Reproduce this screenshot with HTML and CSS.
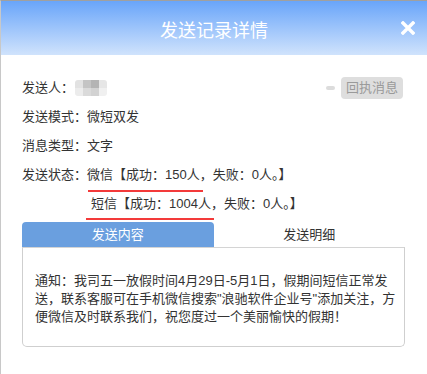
FILE: index.html
```html
<!DOCTYPE html>
<html lang="zh-CN">
<head>
    <meta charset="UTF-8">
    <meta name="viewport" content="width=device-width, initial-scale=1.0">
    <title>发送记录详情</title>
    <link rel="stylesheet" href="styles.css">
</head>
<body>
    <div class="dialog">
        <div class="dialog-head">
            <h1>发送记录详情</h1>
            <span class="close">
                <svg width="14" height="14" viewBox="0 0 14 14"><path d="M2 2 L12 12 M12 2 L2 12" stroke="#fff" stroke-width="3.4" stroke-linecap="square"/></svg>
            </span>
        </div>
        <div class="dialog-body">
            <div class="row row-sender">
                <div>
                    <span>发送人：</span>
                    <span class="mosaic">
                        <i class="m1"></i><i class="m2"></i><i class="m3"></i><i class="m4"></i>
                        <i class="m5"></i><i class="m6"></i><i class="m7"></i><i class="m8"></i>
                    </span>
                </div>
                <div class="receipt">
                    <span class="dash"></span>
                    <span class="btn">回执消息</span>
                </div>
            </div>
            <div class="row">发送模式：微短双发</div>
            <div class="row">消息类型：文字</div>
            <div class="row row-wx">发送状态：微信【成功：150人，失败：0人。】</div>
            <div class="row row-sms">短信【成功：1004人，失败：0人。】</div>

            <div class="tabs">
                <span class="tab active">发送内容</span>
                <span class="tab">发送明细</span>
            </div>
            <div class="tab-panel">
                <p>通知：我司五一放假时间4月29日-5月1日，假期间短信正常发送，联系客服可在手机微信搜索"浪驰软件企业号"添加关注，方便微信及时联系我们，祝您度过一个美丽愉快的假期！</p>
            </div>
        </div>
    </div>
</body>
</html>
```

FILE: styles.css
```css
*{
    padding: 0;
    margin: 0;
}
body{
    background: #fff;
    font-family: "Liberation Sans", "Noto Sans CJK SC", sans-serif;
    font-size: 13px;
    color: #333;
}
.dialog{
    width: 427px;
    height: 374px;
    border-top: 1px solid #a0a0a0;
    border-left: 1px solid #c8c8c8;
    box-sizing: border-box;
    overflow: hidden;
}
.dialog-head{
    height: 54px;
    background: linear-gradient(#69a5fa, #d0e3fc);
    display: flex;
    align-items: center;
    justify-content: center;
    position: relative;
}
.dialog-head h1{
    font-size: 18px;
    font-weight: normal;
    color: #fff;
    margin-top: 1px;
}
.close{
    position: absolute;
    right: 12px;
    top: 20px;
    width: 14px;
    height: 14px;
}
.close svg{
    display: block;
}
.dialog-body{
    padding: 18px 24px 0 21px;
}
.row{
    line-height: 29px;
    height: 29px;
    position: relative;
}
.row-sender{
    display: flex;
    justify-content: space-between;
    align-items: center;
}
.row-sender > div{
    display: flex;
    align-items: center;
}
.mosaic{
    display: grid;
    grid-template-columns: repeat(4, 8px);
    grid-template-rows: repeat(2, 8px);
    margin-left: 1px;
    border-radius: 3px;
    overflow: hidden;
}
.mosaic i{
    display: block;
}
.m1{ background: #e2e2e2; }
.m2{ background: #c4c4c4; }
.m3{ background: #b4b4b4; }
.m4{ background: #e6e6e6; }
.m5{ background: #ececec; }
.m6{ background: #dadada; }
.m7{ background: #d2d2d2; }
.m8{ background: #f0f0f0; }
.receipt{
    gap: 6px;
}
.dash{
    width: 9px;
    height: 4px;
    border-radius: 2px;
    background: #dcdcdc;
}
.btn{
    display: block;
    width: 62px;
    height: 22px;
    line-height: 22px;
    text-align: center;
    background: #dedede;
    color: #9a9a9a;
    border-radius: 4px;
}
.row-wx::after,
.row-sms::after{
    content: "";
    position: absolute;
    height: 2px;
    background: #f33a3a;
}
.row-wx::after{
    left: 66px;
    top: 30px;
    width: 115px;
}
.row-sms{
    padding-left: 69px;
}
.row-sms::after{
    left: 64px;
    top: 29px;
    width: 128px;
}
.tabs{
    display: flex;
    margin-top: 4px;
    width: 383px;
}
.tab{
    flex: 1;
    height: 25px;
    line-height: 25px;
    text-align: center;
}
.tab.active{
    background: #6a9fdf;
    color: #fff;
    border-radius: 4px 4px 0 0;
}
.tab-panel{
    width: 383px;
    height: 100px;
    box-sizing: border-box;
    border: 1px solid #cfcfcf;
    border-top-color: #d4d4d4;
    border-radius: 0 0 5px 5px;
    padding: 24px 6px 0 12px;
}
.tab-panel p{
    line-height: 18px;
}
```
